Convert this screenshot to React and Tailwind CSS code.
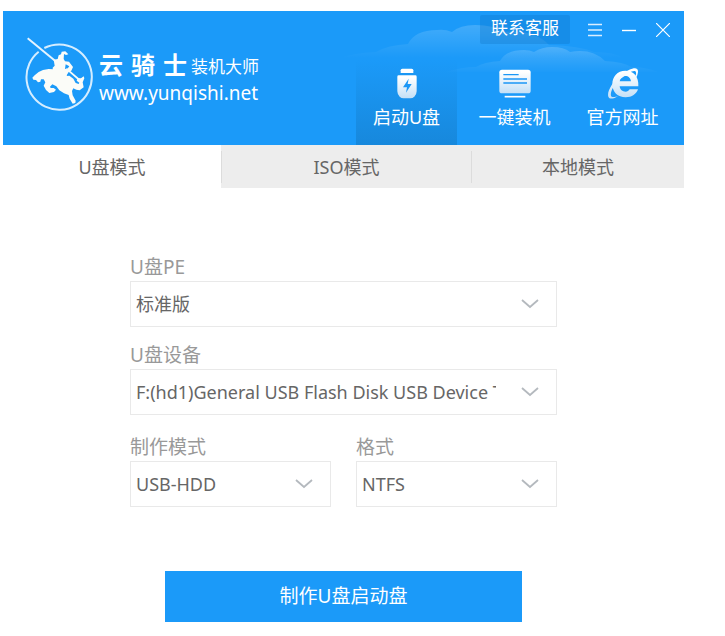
import { useState } from "react";

const NAV = [
  { id: "usb", label: "启动U盘", icon: UsbIcon },
  { id: "install", label: "一键装机", icon: ComputerIcon },
  { id: "site", label: "官方网址", icon: BrowserIcon },
];

const TABS = ["U盘模式", "ISO模式", "本地模式"];

function IconGradient({ id }) {
  return (
    <linearGradient id={id} x1="0" y1="0" x2="0" y2="1">
      <stop offset="0.1" stopColor="#ffffff" />
      <stop offset="1" stopColor="#c3dff6" />
    </linearGradient>
  );
}

function UsbIcon() {
  return (
    <svg width="32" height="32" viewBox="0 0 96 96" aria-hidden="true">
      <defs>
        <IconGradient id="usb-fill" />
      </defs>
      <path d="M29 18v-8q0-5 5-5h28q5 0 5 5v8z" fill="#fff" />
      <path
        d="M19 29q0-4 4-4h50q4 0 4 4v44q0 9-7 16-5 5-12 5H38q-7 0-12-5-7-7-7-16z"
        fill="url(#usb-fill)"
      />
      <path d="M53 35L36 61h12l-3 16 17-26H50z" fill="#1b97f6" />
    </svg>
  );
}

function ComputerIcon() {
  return (
    <svg width="32" height="32" viewBox="0 0 96 96" aria-hidden="true">
      <defs>
        <IconGradient id="pc-fill" />
      </defs>
      <rect x="1" y="8" width="94" height="71" rx="8" fill="url(#pc-fill)" />
      <path d="M13 23h46M13 36h71M13 48h71" stroke="#1b97f6" strokeWidth="4" />
      <path d="M17 89h62" stroke="#fff" strokeWidth="5" />
    </svg>
  );
}

function BrowserIcon() {
  return (
    <svg width="32" height="32" viewBox="0 0 96 96" aria-hidden="true">
      <defs>
        <IconGradient id="ie-fill" />
      </defs>
      <path
        d="M94 58C96 28 79 11 55 11C31 11 16 29 16 51C16 75 32 91 56 91C75 91 88 81 93 67H68C65 72 61 74 56 74C46 74 39 68 38 58zM38 43C40 33 46 27 55 27C64 27 71 33 72 43z"
        fill="url(#ie-fill)"
        fillRule="evenodd"
      />
      <path
        d="M89 30c4-10 6-20 1-24C83 0 63 9 42 24 17 43-1 74 4 89c3 9 16 7 30-2-12 4-20 5-22-1-3-10 8-34 31-52C61 20 79 8 85 13c3 2 3 8 0 14z"
        fill="url(#ie-fill)"
      />
    </svg>
  );
}

function KnightLogo() {
  return (
    <svg
      className="shrink-0"
      width="68"
      height="75"
      viewBox="45 22 204 225"
      aria-hidden="true"
    >
      <path
        d="M103 55A98 98 0 1 1 86 66"
        fill="none"
        stroke="#d5edff"
        strokeWidth="6"
      />
      <path d="M53 26L136 94" stroke="#e6f4ff" strokeWidth="6" />
      {/* rider */}
      <path
        d="M131 90L143 88L146 77L153 74L155 66L166 65L175 74L168 76L162 73L161 88L165 95L177 96L189 112L184 123L176 127L170 137L178 150L130 140L128 114L134 108Z"
        fill="#fbfcf8"
      />
      <path d="M167 104L178 110L171 119L165 117Z" fill="#1b9af9" />
      <path d="M169 117L205 148" stroke="#fbfcf8" strokeWidth="5" />
      {/* horse */}
      <path
        d="M67 144L74 137L86 127L99 121L116 118L130 119L140 130L160 140L178 138L190 147L197 160L206 163L208 159L200 153L203 145L213 146L221 140L223 146L218 158L221 173L209 182L199 180L190 176L186 184L188 197L197 213L196 220L188 222L179 207L176 196L162 191L148 182L139 170L127 164L120 171L122 175L131 175L138 180L132 187L118 190L108 181L101 168L106 158L101 149L93 149L91 156L84 158L78 151L70 150Z"
        fill="#fbfcf8"
      />
    </svg>
  );
}

function Clouds() {
  return (
    <svg
      className="pointer-events-none absolute top-0 right-0"
      width="344"
      height="72"
      viewBox="0 0 344 72"
      aria-hidden="true"
    >
      <defs>
        <linearGradient id="cloud-back" gradientUnits="userSpaceOnUse" x1="0" y1="14" x2="0" y2="47">
          <stop offset="0" stopColor="#fff" stopOpacity="0.17" />
          <stop offset="1" stopColor="#fff" stopOpacity="0" />
        </linearGradient>
        <linearGradient id="cloud-front" gradientUnits="userSpaceOnUse" x1="0" y1="36" x2="0" y2="61">
          <stop offset="0" stopColor="#fff" stopOpacity="0.18" />
          <stop offset="1" stopColor="#fff" stopOpacity="0.01" />
        </linearGradient>
      </defs>
      <path
        d="M0 47Q14 42 36 41Q48 34 68 33Q75 19 97 19Q105 18 112 21Q120 14 135 14Q154 14 163 21Q194 18 209 34Q240 35 254 41Q274 41 284 47z"
        fill="url(#cloud-back)"
      />
      <path
        d="M106 61Q122 56 136 56Q144 51 160 50Q166 39 184 39Q190 39 194 41Q202 36 212 36Q224 36 230 41Q252 37 265 50Q284 51 291 56Q306 56 318 61z"
        fill="url(#cloud-front)"
      />
    </svg>
  );
}

function SelectField({ id, label, options }) {
  return (
    <div className="flex min-w-0 flex-col gap-0.5">
      <label htmlFor={id} className="text-[19px] leading-6 text-[#999]">
        {label}
      </label>
      <div className="relative">
        <select
          id={id}
          className="h-[46px] w-full appearance-none border border-[#e9e9e9] bg-white pr-[60px] pl-[5px] text-lg text-[#666] outline-none"
        >
          {options.map((option) => (
            <option key={option}>{option}</option>
          ))}
        </select>
        <svg
          className="pointer-events-none absolute top-[18px] right-[18px]"
          width="18"
          height="10"
          viewBox="0 0 18 10"
          fill="none"
          stroke="#b4b9be"
          strokeWidth="1.8"
          aria-hidden="true"
        >
          <path d="M1 1l8 7 8-7" />
        </svg>
      </div>
    </div>
  );
}

export default function App() {
  const [page, setPage] = useState("usb");
  const [tab, setTab] = useState(TABS[0]);

  return (
    <div className="min-h-screen bg-white pt-[11px] pr-[41px] pb-3 pl-[3px] font-['Noto_Sans','Noto_Sans_CJK_SC',sans-serif]">
      <header className="relative flex justify-between bg-[#1b9af9] text-white">
        <Clouds />

        {/* Logo */}
        <div className="flex items-start gap-1.5 pt-[26px] pl-[22px]">
          <KnightLogo />
          <div className="flex flex-col pt-3">
            <div className="flex items-center whitespace-nowrap">
              <span className="flex gap-2 text-2xl leading-8 font-bold">
                <span>云</span>
                <span>骑</span>
                <span>士</span>
              </span>
              <span className="pt-1 pl-1 text-[17px] leading-7">装机大师</span>
            </div>
            <span className="text-[19px] leading-6">www.yunqishi.net</span>
          </div>
        </div>

        <div className="relative flex flex-col gap-4 pt-1">
          {/* Window controls */}
          <div className="flex items-center justify-end gap-[18px] pr-[14px]">
            <button className="h-[29px] w-[90px] rounded-xs bg-[#0d6fbf]/30 pb-1 text-[17px] leading-6">
              联系客服
            </button>
            <div className="flex gap-5">
              <button aria-label="菜单">
                <svg width="14" height="14" viewBox="0 0 14 14" stroke="#d9eeff" strokeWidth="1.4">
                  <path d="M0 1.5h14M0 7h14M0 12.5h14" />
                </svg>
              </button>
              <button aria-label="最小化">
                <svg width="14" height="14" viewBox="0 0 14 14" stroke="#fff" strokeWidth="1.4">
                  <path d="M0 7.5h14" />
                </svg>
              </button>
              <button aria-label="关闭">
                <svg width="14" height="14" viewBox="0 0 14 14" stroke="#fff" strokeWidth="1.2">
                  <path d="M0 0l14 14M14 0L0 14" />
                </svg>
              </button>
            </div>
          </div>

          {/* Main navigation */}
          <nav className="flex gap-[7px] pr-[11px]">
            {NAV.map(({ id, label, icon: Icon }) => (
              <button
                key={id}
                onClick={() => setPage(id)}
                className={`flex h-[85px] w-[101px] flex-col items-center gap-1 pt-[7px] text-lg leading-7 whitespace-nowrap ${
                  page === id ? "bg-linear-to-b from-[#1b9af9]/0 to-[#1788dc]" : ""
                }`}
              >
                <Icon />
                {label}
              </button>
            ))}
          </nav>
        </div>
      </header>

      {/* Mode tabs */}
      <div role="tablist" className="grid grid-cols-[218fr_250fr_213fr]">
        {TABS.map((name, i) => (
          <button
            key={name}
            role="tab"
            aria-selected={tab === name}
            onClick={() => setTab(name)}
            className={`flex h-[43px] items-center text-lg text-[#666] ${
              tab === name ? "bg-white" : "bg-[#ededed]"
            }`}
          >
            <span
              className={`flex h-8 flex-1 items-center justify-center ${
                i > 0 ? "border-l border-[#dcdcdc]" : ""
              }`}
            >
              {name}
            </span>
          </button>
        ))}
      </div>

      <form
        className="mx-auto flex w-full max-w-[427px] flex-col pt-[67px]"
        onSubmit={(e) => e.preventDefault()}
      >
        <div className="flex flex-col gap-4">
          <SelectField id="pe" label="U盘PE" options={["标准版"]} />
          <SelectField
            id="device"
            label="U盘设备"
            options={["F:(hd1)General USB Flash Disk USB Device T"]}
          />
          <div className="grid grid-cols-2 gap-[25px] pt-1">
            <SelectField id="mode" label="制作模式" options={["USB-HDD", "USB-ZIP"]} />
            <SelectField id="format" label="格式" options={["NTFS", "FAT32"]} />
          </div>
        </div>
        <button
          type="submit"
          className="mx-auto mt-16 h-[51px] w-full max-w-[357px] bg-[#1b9af9] text-[19px] text-white"
        >
          制作U盘启动盘
        </button>
      </form>
    </div>
  );
}
